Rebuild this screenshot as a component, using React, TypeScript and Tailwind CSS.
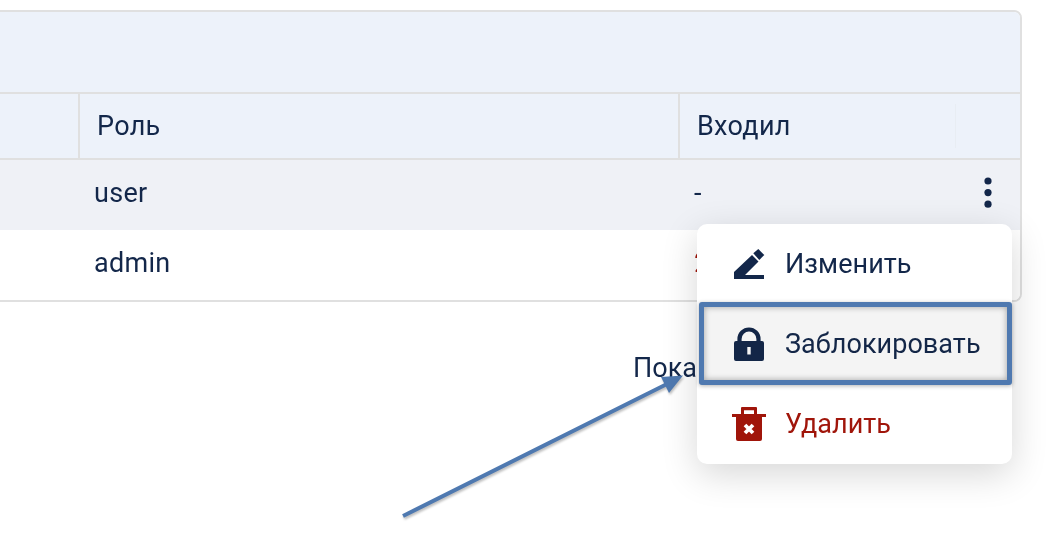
import React from 'react';
import { clsx } from 'clsx';

const Dots = () => (
  <svg width="8" height="32" viewBox="0 0 8 32" className="block self-center ml-[1px]">
    <circle cx="4" cy="4" r="3.600" fill="#13274a" />
    <circle cx="4" cy="15.600" r="3.600" fill="#13274a" />
    <circle cx="4" cy="27.200" r="3.600" fill="#13274a" />
  </svg>
);

const PencilIcon = () => (
  <svg width="31" height="30" viewBox="0 0 31 30" className="block">
    <path d="M0 23L18 6L24.500 12.500L11 26H30V30H0Z" fill="#13274a" />
    <path d="M19.300 4.300L24.300 0L30.300 6L25.300 11Z" fill="#13274a" />
  </svg>
);

const LockIcon = () => (
  <svg width="30" height="34" viewBox="0 0 30 34" className="block">
    <path d="M5.500 15V12a9.500 9.500 0 0 1 19 0V15" fill="none" stroke="#13274a" strokeWidth="4.200" />
    <path
      fillRule="evenodd"
      d="M2 14H28a2 2 0 0 1 2 2V32a2 2 0 0 1-2 2H2a2 2 0 0 1-2-2V16a2 2 0 0 1 2-2ZM13.300 20V27.500H16.700V20Z"
      fill="#13274a"
    />
  </svg>
);

const TrashIcon = () => (
  <svg width="34" height="34" viewBox="0 0 34 34" className="block">
    <path fillRule="evenodd" d="M10 0H24a1 1 0 0 1 1 1V7H22V3.300H12V7H9V1a1 1 0 0 1 1-1Z" fill="#a0150a" />
    <path d="M0 7H34V10H0Z" fill="#a0150a" />
    <path d="M4 10H30V32a2 2 0 0 1-2 2H6a2 2 0 0 1-2-2Z" fill="#a0150a" />
    <path d="M13 18L21 26M21 18L13 26" stroke="#ffffff" strokeWidth="3.800" />
  </svg>
);

const Arrow = () => (
  <svg
    width="300"
    height="160"
    viewBox="0 0 300 160"
    className="absolute left-[395px] top-[365px] drop-shadow-[1px_2px_1px_rgba(0,0,0,0.25)]"
  >
    <path d="M8 151L272 19" stroke="#4f79b0" strokeWidth="4" fill="none" />
    <path d="M288 10.500L266 12L274 28Z" fill="#4f79b0" />
  </svg>
);

const Cell = ({ className, children }: { className?: string; children?: React.ReactNode }) => (
  <div className={clsx('flex items-center', className)}>{children}</div>
);

export default function App() {
  return (
    <div className="relative w-[1053px] h-[548px] overflow-hidden bg-white font-['Roboto',sans-serif] text-[#13274a] text-[27px] tracking-[0.3px]">
      {/* Card */}
      <div className="ml-[-8px] mt-[10px] w-[1030px] h-[292px] border-2 border-[#e0e0e0] rounded-[8px] overflow-hidden">
        <div className="h-[80px] bg-[#edf2fa]" />
        <div className="h-[2px] bg-[#e0e0e0]" />

        {/* Header */}
        <div className="flex h-[64px] bg-[#edf2fa]">
          <Cell className="w-[86px] border-r-2 border-[#e0e0e0]" />
          <Cell className="w-[600px] pl-[17px] border-r-2 border-[#e0e0e0]">Роль</Cell>
          <Cell className="w-[275px] pl-[17px]">Входил</Cell>
          <div className="w-px my-[10px] bg-[#e8edf3]" />
        </div>
        <div className="h-[2px] bg-[#e0e0e0]" />

        {/* Rows */}
        <div className="flex h-[70px] pb-[4px] bg-[#eff1f6]">
          <Cell className="w-[100px]" />
          <Cell className="w-[600px]">user</Cell>
          <Cell className="w-[289px]">-</Cell>
          <Dots />
        </div>
        <div className="flex h-[70px] pb-[4px] bg-white">
          <Cell className="w-[100px]" />
          <Cell className="w-[600px]">admin</Cell>
          <Cell className="text-[#a0150a]">2</Cell>
        </div>
      </div>

      {/* Pagination */}
      <div className="mt-[46px] ml-[633px] leading-[40px] whitespace-nowrap tracking-[0px]">Показано</div>

      <Arrow />

      {/* Menu */}
      <div className="absolute left-[697px] top-[224px] w-[315px] h-[240px] flex flex-col bg-white rounded-[10px] shadow-[0_10px_36px_rgba(0,0,0,0.16)] tracking-[0.05px]">
        <div className="flex items-center h-[80px] pl-[37px] gap-[20px]">
          <PencilIcon />
          <span className="mt-[1px]">Изменить</span>
        </div>
        <div className="flex items-center h-[80px] pl-[37px] gap-[21px]">
          <LockIcon />
          <span className="mt-[1px]">Заблокировать</span>
        </div>
        <div className="flex items-center h-[80px] pl-[35px] gap-[19px] text-[#a0150a]">
          <TrashIcon />
          <span className="mt-[1px]">Удалить</span>
        </div>
      </div>

      {/* Annotation frame */}
      <div className="absolute left-[699px] top-[302px] w-[313px] h-[83px] border-[5px] border-[#4f79b0] rounded-[3px] shadow-[0_1px_4px_rgba(0,0,0,0.3),inset_0_0_6px_rgba(0,0,0,0.35)] bg-[#f4f4f4] mix-blend-multiply" />
    </div>
  );
}
